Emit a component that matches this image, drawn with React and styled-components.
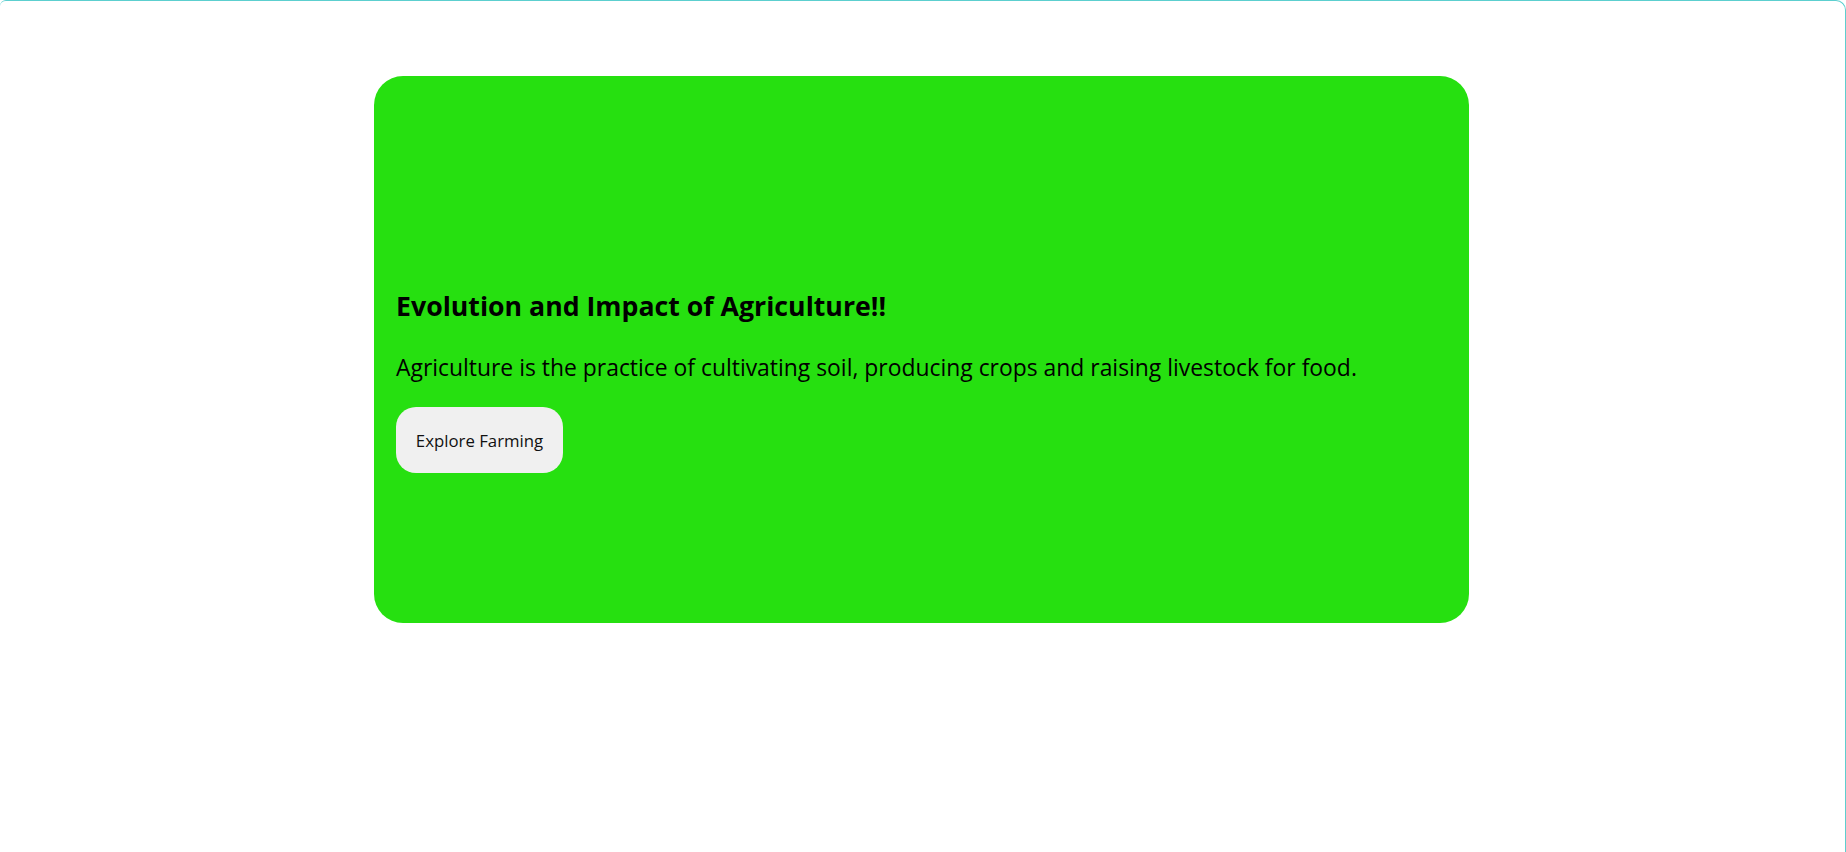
import React from "react";
import styled, { createGlobalStyle } from "styled-components";

const Global = createGlobalStyle`
  html, body { margin: 0; padding: 0; background: #ffffff; }
  body { font-family: "Open Sans", "Noto Sans", sans-serif; }
`;

const Frame = styled.div`
  box-sizing: border-box;
  width: 1846px;
  height: 852px;
  border-top: 1px solid #5ccfcf;
  border-right: 1px solid #5ccfcf;
  border-top-left-radius: 6px;
  border-top-right-radius: 10px;
  padding: 75px 0 0 374px;
`;

const Card = styled.section`
  box-sizing: border-box;
  width: 1095px;
  height: 547px;
  background: #26e010;
  border-radius: 29px;
  padding: 213px 21px 0 22px;
  display: flex;
  flex-direction: column;
  align-items: flex-start;
`;

const Title = styled.h1`
  margin: 0;
  font-size: 26.7px;
  font-weight: 700;
  color: #000;
  line-height: 34px;
`;

const Text = styled.p`
  margin: 30px 0 0;
  font-size: 22.9px;
  font-weight: 400;
  color: #000;
  line-height: 30px;
`;

const Button = styled.button`
  margin-top: 24px;
  width: 167px;
  height: 66px;
  padding: 0;
  border: none;
  border-radius: 20px;
  background: #f0f0f0;
  color: #111;
  font-family: inherit;
  font-size: 16.8px;
  cursor: pointer;
`;

export default function App() {
  return (
    <>
      <Global />
      <Frame>
        <Card>
          <Title>Evolution and Impact of Agriculture!!</Title>
          <Text>
            Agriculture is the practice of cultivating soil, producing crops and raising livestock for food.
          </Text>
          <Button>Explore Farming</Button>
        </Card>
      </Frame>
    </>
  );
}
